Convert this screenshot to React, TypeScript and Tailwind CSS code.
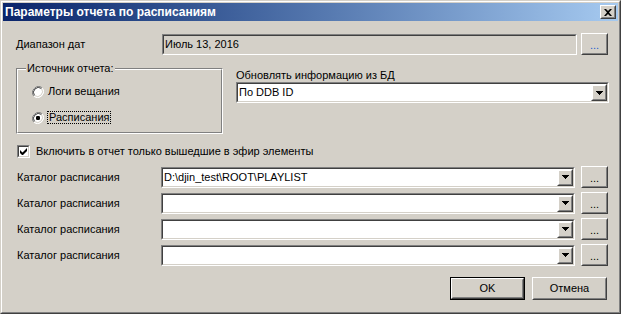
import React from 'react';

const Sunken: React.FC<{ className?: string; inner?: string; children?: React.ReactNode }> = ({
  className = '',
  inner = '',
  children,
}) => (
  <div className={`border border-t-[#808080] border-l-[#808080] border-b-white border-r-white ${className}`}>
    <div
      className={`h-full border border-t-[#404040] border-l-[#404040] border-b-[#d4d0c8] border-r-[#d4d0c8] ${inner}`}
    >
      {children}
    </div>
  </div>
);

const Raised: React.FC<{ className?: string; inner?: string; children?: React.ReactNode }> = ({
  className = '',
  inner = '',
  children,
}) => (
  <div className={`bg-[#d4d0c8] border border-t-white border-l-white border-b-[#404040] border-r-[#404040] ${className}`}>
    <div
      className={`h-full border border-t-[#d4d0c8] border-l-[#d4d0c8] border-b-[#808080] border-r-[#808080] flex items-center justify-center ${inner}`}
    >
      {children}
    </div>
  </div>
);

const Arrow = () => (
  <svg width="7" height="4" viewBox="0 0 7 4">
    <path d="M0 0h7v1H0zM1 1h5v1H1zM2 2h3v1H2zM3 3h1v1H3z" fill="#000" />
  </svg>
);

const Combo: React.FC<{ className?: string; value?: string }> = ({ className = '', value = '' }) => (
  <Sunken className={`h-[21px] ${className}`} inner="bg-white flex items-center justify-between">
    <span className="pl-[1px] leading-none">{value}</span>
    <Raised className="w-[16px] h-[17px] border-t-[#d4d0c8] border-l-[#d4d0c8]" inner="border-t-white border-l-white">
      <Arrow />
    </Raised>
  </Sunken>
);

const Dots: React.FC<{ blue?: boolean }> = ({ blue }) => (
  <Raised className="w-[27px] h-[22px] shrink-0">
    <span className={`leading-none mt-[2px] ${blue ? 'text-[#1a5fd0]' : 'text-black'}`}>...</span>
  </Raised>
);

const Radio: React.FC<{ checked?: boolean }> = ({ checked }) => (
  <svg width="12" height="12" viewBox="0 0 12 12" className="shrink-0">
    <circle cx="6" cy="6" r="5.5" fill="#fff" />
    <path d="M10.2 1.8A6 6 0 0 0 1.8 10.2" stroke="#808080" strokeWidth="1" fill="none" />
    <path d="M1.8 10.2A6 6 0 0 0 10.2 1.8" stroke="#fff" strokeWidth="1" fill="none" />
    <path d="M9.5 2.5A5 5 0 0 0 2.5 9.5" stroke="#404040" strokeWidth="1" fill="none" />
    <path d="M2.5 9.5A5 5 0 0 0 9.5 2.5" stroke="#d4d0c8" strokeWidth="1" fill="none" />
    {checked && <rect x="4" y="4" width="4" height="4" rx="1.2" fill="#000" />}
  </svg>
);

const ROWS = ['D:\\djin_test\\ROOT\\PLAYLIST', '', '', ''];

export default function App() {
  return (
    <div className="w-[621px] h-[314px] bg-[#d4d0c8] text-[11px] text-black font-['Liberation_Sans',Arial,sans-serif] border border-t-[#d4d0c8] border-l-[#d4d0c8] border-b-[#404040] border-r-[#404040]">
      <div className="h-full border border-t-white border-l-white border-b-[#808080] border-r-[#808080] p-px flex flex-col">
        {/* title bar */}
        <div className="h-[18px] shrink-0 flex items-center justify-between bg-gradient-to-r from-[#0a246a] to-[#a6caf0] pl-[2px] pr-[2px]">
          <span className="text-white font-bold text-[12px] leading-none">Параметры отчета по расписаниям</span>
          <Raised className="w-[16px] h-[14px]">
            <svg width="8" height="7" viewBox="0 0 8 7">
              <path d="M0 0h2l2 2 2-2h2L5 3.5 8 7H6L4 5 2 7H0l3-3.5z" fill="#000" />
            </svg>
          </Raised>
        </div>

        <div className="flex flex-col pl-[13px] pr-[10px]">
          {/* date range */}
          <div className="flex items-center mt-[12px] h-[22px]">
            <span className="w-[146px] shrink-0">Диапазон дат</span>
            <Sunken className="w-[415px] h-[21px]" inner="flex items-center pl-[1px]">
              Июль 13, 2016
            </Sunken>
            <div className="ml-[4px]">
              <Dots blue />
            </div>
          </div>

          {/* source + db update */}
          <div className="flex items-start mt-[13px]">
            <div className="relative w-[207px] h-[66px] shrink-0 border border-t-[#808080] border-l-[#808080] border-b-white border-r-white">
              <div className="h-full border border-t-white border-l-white border-b-[#808080] border-r-[#808080] flex flex-col pl-[14px] pt-[15px] gap-[13px]">
                <div className="flex items-center gap-[4px] h-[13px]">
                  <Radio />
                  <span>Логи вещания</span>
                </div>
                <div className="flex items-center gap-[3px] h-[13px]">
                  <Radio checked />
                  <span className="border border-dotted border-black px-px leading-[11px]">Расписания</span>
                </div>
              </div>
              <span className="absolute left-[9px] -top-[7px] bg-[#d4d0c8] px-px leading-[13px]">Источник отчета:</span>
            </div>
            <div className="flex flex-col ml-[13px] mt-[1px]">
              <span className="leading-[13px]">Обновлять информацию из БД</span>
              <Combo className="w-[373px]" value="По DDB ID" />
            </div>
          </div>

          {/* checkbox */}
          <div className="flex items-center mt-[11px] h-[13px]">
            <div className="w-[13px] h-[13px] ml-px">
              <Sunken className="w-[13px] h-[13px]" inner="bg-white flex items-center justify-center">
                <svg width="7" height="7" viewBox="0 0 7 7">
                  <path d="M0 2v3l2 2h1l4-4V0L2.5 4.5z" fill="#000" />
                </svg>
              </Sunken>
            </div>
            <span className="ml-[6px]">Включить в отчет только вышедшие в эфир элементы</span>
          </div>

          {/* schedule catalogs */}
          <div className="flex flex-col gap-[4px] mt-[8px]">
            {ROWS.map((v, i) => (
              <div key={i} className="flex items-center h-[22px]">
                <span className="w-[145px] shrink-0 pl-px">Каталог расписания</span>
                <Combo className="w-[414px]" value={v} />
                <div className="ml-[6px]">
                  <Dots />
                </div>
              </div>
            ))}
          </div>

          {/* buttons */}
          <div className="flex justify-end gap-[7px] mt-[11px] pr-[1px]">
            <div className="border border-black w-[75px] h-[23px]">
              <Raised className="h-full">OK</Raised>
            </div>
            <Raised className="w-[75px] h-[23px]">Отмена</Raised>
          </div>
        </div>
      </div>
    </div>
  );
}
